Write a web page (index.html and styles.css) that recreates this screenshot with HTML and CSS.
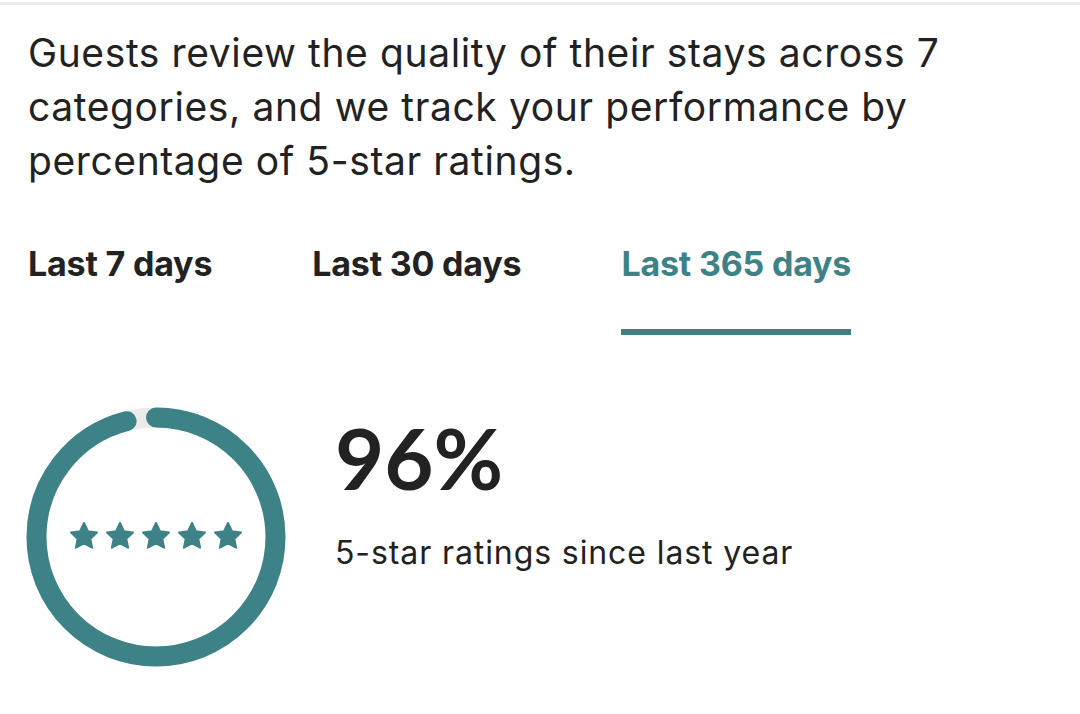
FILE: index.html
```html
<!DOCTYPE html>
<html lang="en">
<head>
<meta charset="utf-8">
<title>Guest review quality</title>
<link rel="stylesheet" href="styles.css">
</head>
<body>
  <div class="top-rule"></div>
  <main class="content">
    <p class="intro">Guests review the quality of their stays across 7 categories, and we track your performance by percentage of 5-star ratings.</p>

    <nav class="tabs">
      <button class="tab">Last 7 days</button>
      <button class="tab">Last 30 days</button>
      <button class="tab tab-active">Last 365 days</button>
    </nav>

    <section class="summary">
      <div class="ring">
        <svg class="ring-svg" width="260" height="260" viewBox="0 0 260 260">
          <circle class="ring-track" cx="130" cy="130" r="119.5"></circle>
          <circle class="ring-fill" cx="130" cy="130" r="119.5" transform="rotate(-90 130 130)"></circle>
        </svg>
        <div class="stars">
          <svg class="star" viewBox="0 0 32 32"><path d="M16 3l3.9 8.3 9.1 1.1-6.7 6.3 1.8 9L16 23.3l-8.1 4.4 1.8-9-6.7-6.3 9.1-1.1z"/></svg>
          <svg class="star" viewBox="0 0 32 32"><path d="M16 3l3.9 8.3 9.1 1.1-6.7 6.3 1.8 9L16 23.3l-8.1 4.4 1.8-9-6.7-6.3 9.1-1.1z"/></svg>
          <svg class="star" viewBox="0 0 32 32"><path d="M16 3l3.9 8.3 9.1 1.1-6.7 6.3 1.8 9L16 23.3l-8.1 4.4 1.8-9-6.7-6.3 9.1-1.1z"/></svg>
          <svg class="star" viewBox="0 0 32 32"><path d="M16 3l3.9 8.3 9.1 1.1-6.7 6.3 1.8 9L16 23.3l-8.1 4.4 1.8-9-6.7-6.3 9.1-1.1z"/></svg>
          <svg class="star" viewBox="0 0 32 32"><path d="M16 3l3.9 8.3 9.1 1.1-6.7 6.3 1.8 9L16 23.3l-8.1 4.4 1.8-9-6.7-6.3 9.1-1.1z"/></svg>
        </div>
      </div>
      <div class="stats">
        <div class="percent">96%</div>
        <div class="caption">5-star ratings since last year</div>
      </div>
    </section>
  </main>
</body>
</html>
```

FILE: styles.css
```css
* {
  box-sizing: border-box;
}

html, body {
  margin: 0;
  padding: 0;
  background: #ffffff;
}

body {
  font-family: "Inter", "Noto Sans", sans-serif;
  color: #222222;
  width: 1080px;
  height: 714px;
  overflow: hidden;
}

.top-rule {
  margin-top: 2px;
  height: 3px;
  background: #ebebeb;
}

.content {
  padding: 0 28px;
}

.intro {
  margin: 21px 0 0;
  font-size: 39px;
  line-height: 54px;
  font-weight: 400;
  letter-spacing: 0.6px;
}

.tabs {
  display: flex;
  gap: 100px;
  margin-top: 56px;
}

.tab {
  font-family: inherit;
  background: none;
  border: none;
  padding: 0 0 45px;
  margin: 0;
  font-size: 34px;
  line-height: 40px;
  font-weight: 700;
  color: #222222;
  border-bottom: 6px solid transparent;
  letter-spacing: -0.2px;
}

.tab-active {
  color: #3d8286;
  border-bottom-color: #417f80;
}

.summary {
  display: flex;
  align-items: flex-start;
  gap: 49px;
  margin-top: 72px;
}

.ring {
  position: relative;
  width: 260px;
  height: 260px;
  margin-left: -2px;
  flex-shrink: 0;
}

.ring-svg {
  display: block;
}

.ring-track {
  fill: none;
  stroke: #ebebeb;
  stroke-width: 20;
}

.ring-fill {
  fill: none;
  stroke: #3d8286;
  stroke-width: 20;
  stroke-linecap: round;
  stroke-dasharray: 720.8 750.8;
}

.stars {
  position: absolute;
  inset: 0;
  display: flex;
  align-items: center;
  justify-content: center;
  gap: 4px;
  padding-bottom: 2px;
}

.star {
  width: 32px;
  height: 32px;
  fill: #3d8286;
  stroke: #3d8286;
  stroke-width: 2;
  stroke-linejoin: round;
}

.stats {
  padding-top: 0;
}

.percent {
  font-family: "Lato", "Inter", sans-serif;
  font-size: 85px;
  line-height: 100px;
  font-weight: 700;
  letter-spacing: 0;
}

.caption {
  margin-top: 26px;
  font-size: 32px;
  line-height: 40px;
  font-weight: 400;
  letter-spacing: 0.9px;
}
```
